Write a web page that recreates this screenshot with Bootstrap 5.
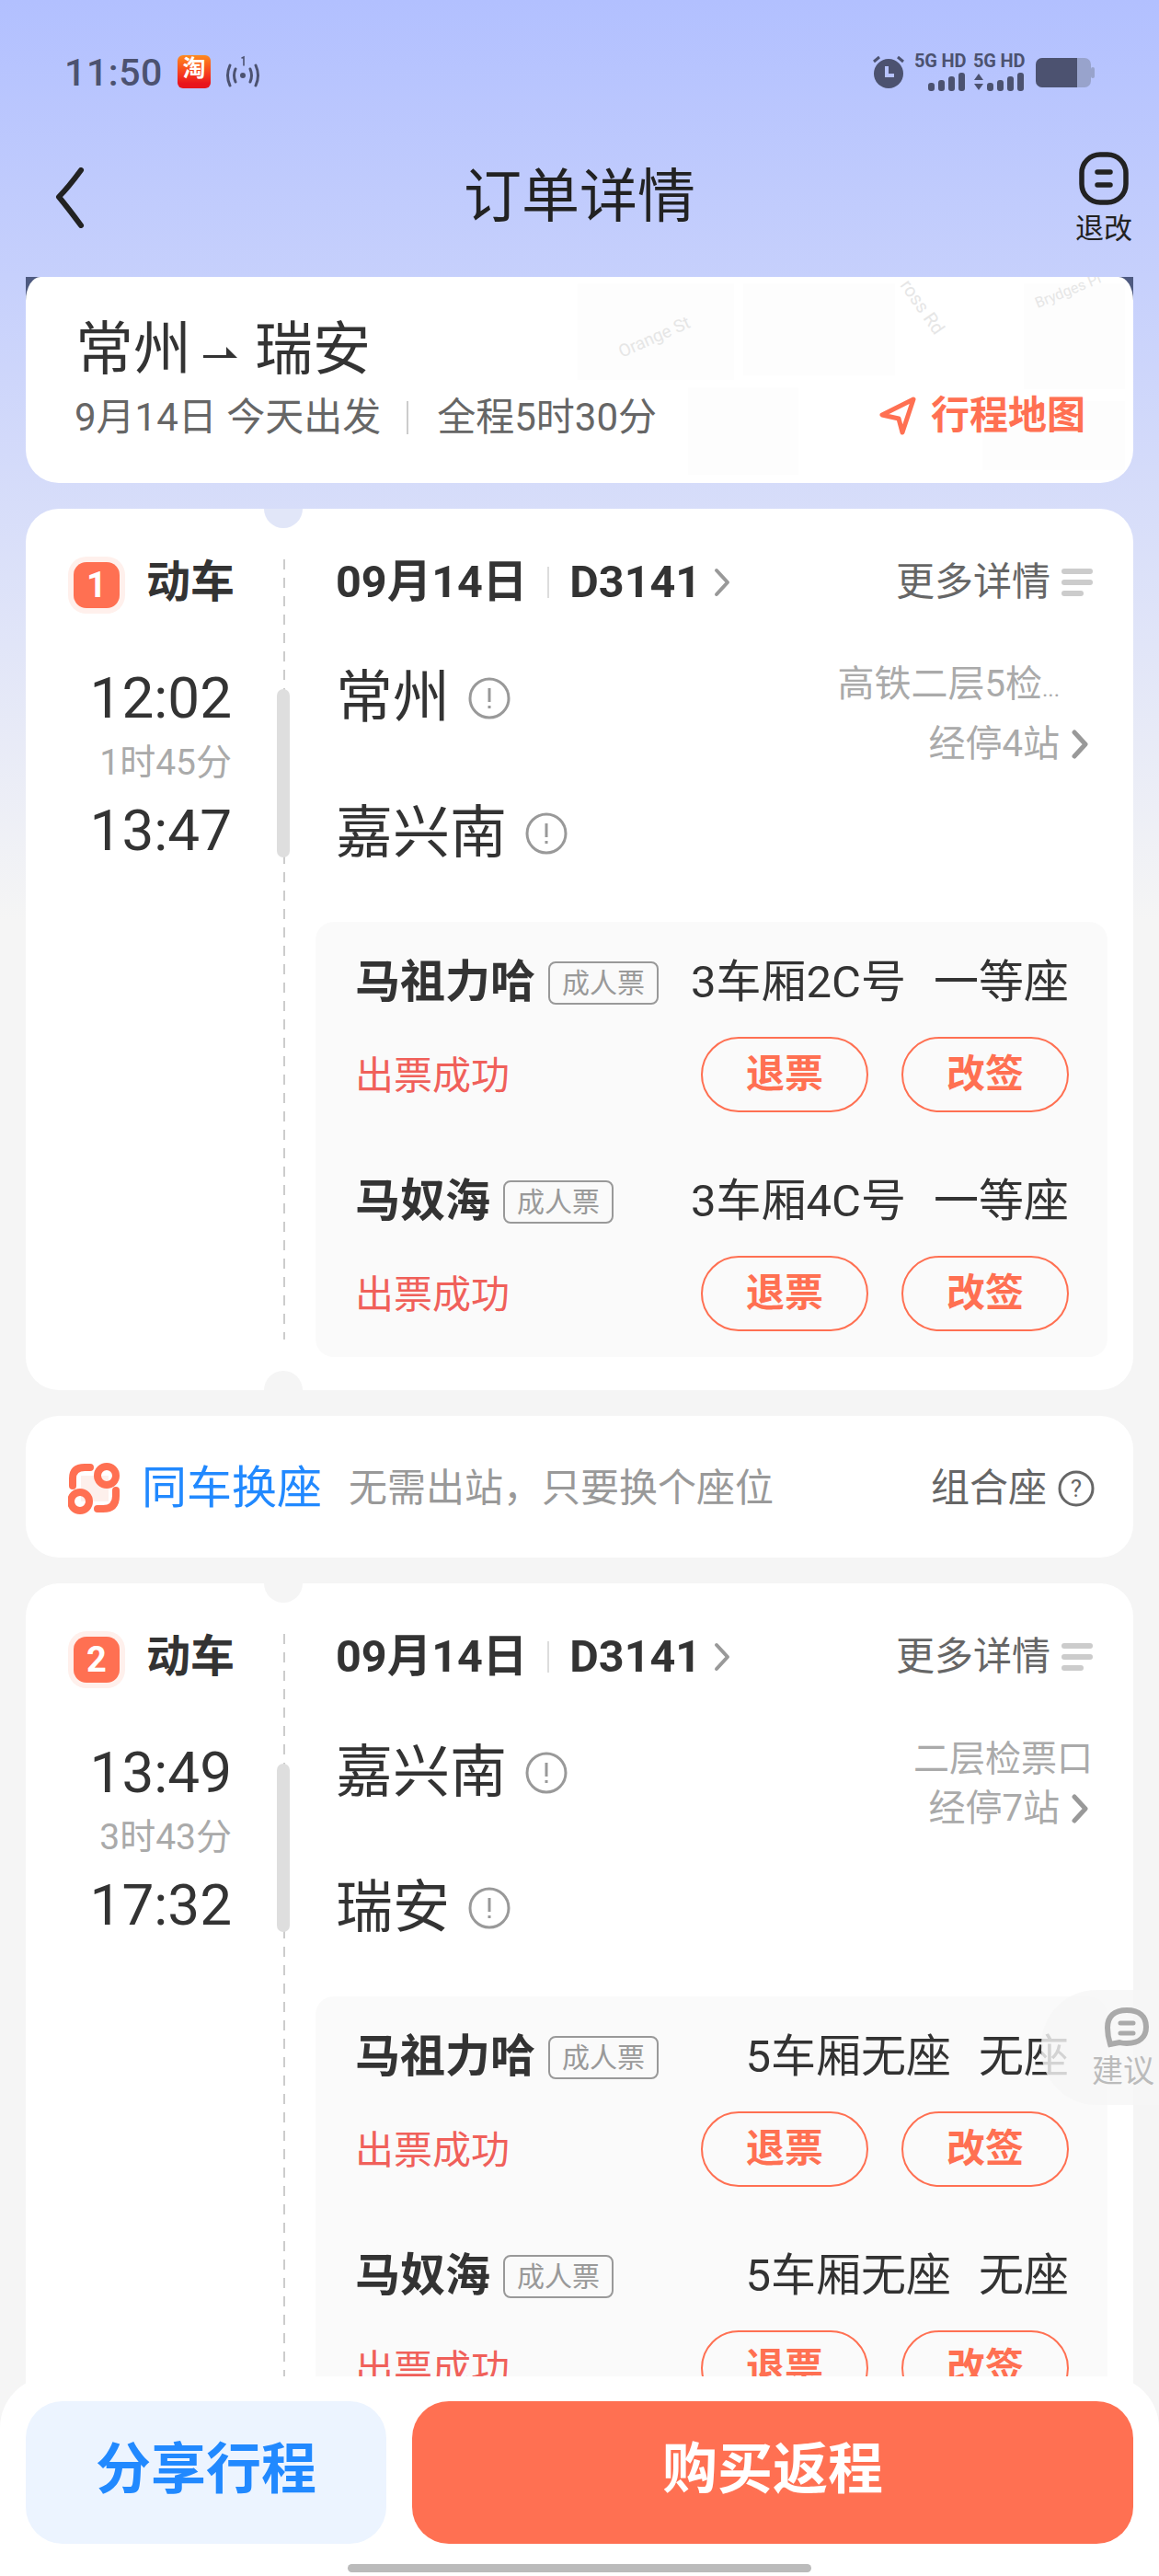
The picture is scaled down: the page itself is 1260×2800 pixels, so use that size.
<!DOCTYPE html>
<html lang="zh">
<head>
<meta charset="utf-8">
<title>订单详情</title>
<link rel="stylesheet" href="https://cdn.jsdelivr.net/npm/bootstrap@5.3.0/dist/css/bootstrap.min.css">
<style>
html,body{margin:0;background:#f5f5f5}
body{font-family:Roboto,"Noto Sans CJK SC",sans-serif;color:#333}
.screen{width:1260px;height:2800px;overflow:hidden;position:relative;background:linear-gradient(#b2c0ff 0,#f5f5f5 1000px)}
.statusbar{height:125px;padding:57px 70px 0;color:#4c5270}
.clock{font-size:41px;font-weight:500;line-height:44px;letter-spacing:.6px}
.tb-icon{width:36px;height:36px;margin:3px 0 0 16px;border-radius:6px;background:linear-gradient(#ff8a1e,#f5351e 70%,#e8141c);color:#fff;font-weight:700;font-size:25px;line-height:30px;text-align:center;border-bottom:5px solid #e8141c}
.net-label{font-size:20px;font-weight:700;line-height:18px;letter-spacing:-.2px;width:58px;white-space:nowrap}
.topbar{height:176px;padding:0 28px 0 60px;position:relative}
.page-title{font-size:63px;line-height:70px;color:#222;position:absolute;left:0;right:0;top:54px;text-align:center;margin:0;font-weight:400}
.refund-link{width:64px;font-size:31px;line-height:36px;color:#222;text-align:center;margin-top:40px}
.hero-wrap{margin:0 28px;height:224px;background:linear-gradient(#4e5a80 0,#4e5a80 30px,transparent 30px)}
.hero{height:224px;background:#fff;border-radius:16px 16px 36px 36px/26px 26px 36px 36px;position:relative;overflow:hidden;padding:43px 52px 0 54px}
.hero-map{position:absolute;left:0;top:0;width:1204px;height:224px}
.hero-map text{font-family:Roboto,sans-serif;fill:#e6e6e6}
.hero-main{position:relative}
.route{font-size:63px;line-height:72px;color:#333;white-space:nowrap}
.route svg{margin:0 18px 0 13px;vertical-align:middle}
.hero-sub{font-size:42px;line-height:50px;color:#666;margin-top:13px}
.hero-sub i{display:block;width:2px;height:36px;background:#ccc;margin:0 31px 0 28px}
.hero-link{font-size:42px;line-height:50px;color:#ff7052;font-weight:700}
.panel{margin:28px 28px 0;background:#fff;border-radius:36px;position:relative}
.bite{position:absolute;left:259px;width:42px;height:21px;background:#e1e6f8}
.bite-top{top:0;border-radius:0 0 21px 21px}
.bite-bot{bottom:0;border-radius:21px 21px 0 0;background:#f5f5f5}
.dash{position:absolute;left:280px;top:55px;bottom:55px;width:2px;background:repeating-linear-gradient(#ccc 0,#ccc 11px,transparent 11px,transparent 20px)}
.thumb{position:absolute;left:273px;top:196px;width:14px;height:183px;background:#dedede;border-radius:7px}
.train{padding:55px 44px 36px 0}
.left-col{width:337px;flex:none}
.num{width:50px;height:50px;background:#ff7052;border-radius:14px;color:#fff;font-size:38px;font-weight:700;line-height:50px;text-align:center;box-shadow:0 0 0 6px #fff0ec;margin:3px 29px 0 52px}
.kind{font-size:48px;font-weight:700;line-height:50px;color:#333}
.times{width:166px;margin-left:58px;text-align:right;margin-top:68px}
.time{font-size:62px;line-height:60px;color:#333}
.dura{font-size:39px;line-height:46px;color:#aaa;margin:17px 0 21px}
.date{font-size:48.5px;font-weight:700;line-height:50px;color:#333;white-space:nowrap}
.date i{display:block;width:2px;height:34px;background:#ddd;margin:0 22px 0 22px}
.date svg{margin-left:13px!important}
.more{font-size:42px;line-height:50px;color:#666}
.bars{width:34px;margin-left:12px}
.bars span{display:block;height:6px;background:#ccc;border-radius:3px;margin-bottom:6px}
.bars span:last-child{width:24px;margin:0}
.stations{padding-top:12px}
.st{font-size:62px;line-height:60px;color:#333}
.st svg{margin-left:20px}
.st+.st{margin-top:87px}
.info{font-size:40px;line-height:50px;color:#aaa;text-align:right;white-space:nowrap;margin-top:2px}
.info .cut{padding-right:36px}
.info .cut span{font-size:24px}
.info .stops{padding-right:4px}
.info svg{margin-left:12px;vertical-align:-3px}
.pax-box{background:#fafafa;border-radius:20px;margin:66px -16px 0 -22px;padding:41px 42px 28px 43px}
.pax+.pax{margin-top:72px}
.pname{font-size:49px;font-weight:700;line-height:50px;color:#333;white-space:nowrap}
.ptag{font-size:30px;line-height:43px;height:47px;padding:0 13px;border:2px solid #999;border-radius:8px;color:#999;margin-left:14px;white-space:nowrap}
.seat{font-size:49px;line-height:50px;color:#333;white-space:nowrap}
.seat span{margin-left:30px}
.pact{margin-top:34px}
.ok{font-size:42px;line-height:50px;color:#f0605a;margin-top:4px}
.act{width:182px;height:82px;border:2px solid #ff7052;border-radius:41px;color:#ff7052;background:transparent;font-size:42px;font-weight:700;line-height:1;padding:0;margin-left:36px}
.swap{height:154px;padding:3px 42px 0 46px}
.swap-title{font-size:49px;color:#2189ff;line-height:60px;margin:0 29px 0 22px}
.swap-sub{font-size:42px;color:#999;line-height:60px}
.swap-end{font-size:42px;color:#666;line-height:60px}
.suggest{position:absolute;right:0;top:2163px;width:128px;height:125px;background:rgba(247,247,247,.82);border-radius:60px 0 0 60px;color:#bbb;font-size:34px;line-height:38px;padding:19px 0 0 55px}
.suggest span{display:block;white-space:nowrap;margin-top:6px}
.suggest svg{display:block;margin-left:14px}
.bottombar{position:absolute;left:0;right:0;top:2583px;height:217px;background:#fff;border-radius:56px 56px 0 0;padding:27px 28px 0}
.cta{height:155px;border-radius:40px;font-size:60px;font-weight:700;border:0;padding:0 0 6px;line-height:1}
.cta-share{width:392px;background:#ecf4ff;color:#2189ff}
.cta-buy{flex:1;margin-left:28px;background:#ff7052;color:#fff}
.home{width:504px;height:9px;border-radius:5px;background:#bbb;margin:22px 0 0 350px}
</style>
</head>
<body>
<div class="screen">

  <div class="statusbar d-flex justify-content-between align-items-start">
    <div class="d-flex align-items-start">
      <div class="clock">11:50</div>
      <div class="tb-icon">淘</div>
      <svg class="ms-3" width="38" height="36" viewBox="0 0 38 36" fill="none" stroke="#4c5270" stroke-width="3" stroke-linecap="round" style="margin-top:3px">
        <circle cx="19" cy="22" r="3" fill="#4c5270" stroke="none"/>
        <path d="M11 15q-3 7 0 14M27 15q3 7 0 14M5 11q-5 11 0 22M33 11q5 11 0 22"/>
        <path d="M18 3l2-1v9" stroke-width="1.6"/>
      </svg>
    </div>
    <div class="d-flex align-items-start">
      <svg width="36" height="36" viewBox="0 0 36 36" style="margin:3px 6px 0 0">
        <circle cx="18" cy="20" r="16" fill="#4c5270"/>
        <path d="M2 7l6-5M34 7l-6-5" stroke="#4c5270" stroke-width="3" fill="none"/>
        <path d="M16 12v10h8" stroke="#b7c3ff" stroke-width="4" fill="none"/>
      </svg>
      <div class="d-flex flex-column align-items-start ms-1" style="width:60px">
        <div class="net-label">5G HD</div>
        <svg width="58" height="20" viewBox="0 0 58 20" class="mt-1"><g fill="#4c5270"><rect x="15" y="11" width="7" height="9" rx="3"/><rect x="26" y="8" width="7" height="12" rx="3"/><rect x="37" y="4" width="7" height="16" rx="3"/><rect x="48" y="0" width="7" height="20" rx="3"/></g></svg>
      </div>
      <div class="d-flex flex-column align-items-start ms-1" style="width:60px">
        <div class="net-label">5G HD</div>
        <svg width="58" height="20" viewBox="0 0 58 20" class="mt-1"><g fill="#4c5270"><path d="M1 8L6 1l5 7zM1 12h10l-5 7z"/><rect x="15" y="11" width="7" height="9" rx="3"/><rect x="26" y="8" width="7" height="12" rx="3"/><rect x="37" y="4" width="7" height="16" rx="3"/><rect x="48" y="0" width="7" height="20" rx="3"/></g></svg>
      </div>
      <svg width="64" height="32" viewBox="0 0 64 32" class="ms-2" style="margin-top:6px">
        <rect x="0" y="0" width="60" height="32" rx="7" fill="#98a3cc"/>
        <path d="M7 0h38v32H7a7 7 0 0 1-7-7V7a7 7 0 0 1 7-7z" fill="#4c5270"/>
        <rect x="60" y="10" width="4" height="12" rx="2" fill="#98a3cc"/>
      </svg>
    </div>
  </div>

  <div class="topbar d-flex justify-content-between align-items-start">
    <svg width="32" height="66" viewBox="0 0 32 66" fill="none" stroke="#222" stroke-width="6" stroke-linecap="round" stroke-linejoin="round" style="margin-top:57px"><path d="M28 3Q14 22 4 32Q14 44 28 63"/></svg>
    <h1 class="page-title">订单详情</h1>
    <div class="refund-link d-flex flex-column align-items-center">
      <svg width="54" height="58" viewBox="0 0 54 58" fill="none" stroke="#222" stroke-width="5.5" stroke-linecap="round"><rect x="3" y="3" width="48" height="52" rx="20"/><path d="M20 22h14M20 36h14"/></svg>
      <div class="mt-2" style="white-space:nowrap">退改</div>
    </div>
  </div>

  <div class="hero-wrap">
    <div class="hero">
      <svg class="hero-map" viewBox="0 0 1204 224" aria-hidden="true">
        <g fill="#fdfdfd">
          <rect x="600" y="7" width="170" height="105"/>
          <rect x="780" y="7" width="165" height="100"/>
          <rect x="1085" y="7" width="110" height="115"/>
          <rect x="720" y="120" width="120" height="95"/>
          <rect x="1040" y="135" width="155" height="75"/>
        </g>
        <text transform="translate(648 88) rotate(-24)" font-size="19">Orange St</text>
        <text transform="translate(950 9) rotate(55)" font-size="20">ross Rd</text>
        <text transform="translate(1100 34) rotate(-22)" font-size="16">Brydges Pl</text>
      </svg>
      <div class="hero-main d-flex flex-column h-100">
        <div class="route">常州<svg width="38" height="20" viewBox="0 0 38 20"><path d="M0 12h25V3l12 12H0z" fill="#333"/></svg>瑞安</div>
        <div class="d-flex justify-content-between align-items-center">
          <div class="hero-sub d-flex align-items-center" style="margin-left:-1px">9月14日 今天出发<i></i>全程5时30分</div>
          <div class="hero-link d-flex align-items-center" style="margin-top:8px">
            <svg class="me-3" width="40" height="42" viewBox="0 0 40 42" fill="none" stroke="#ff7052" stroke-width="5" stroke-linejoin="round"><path d="M37 3L3 20l18 4 4 15z"/></svg>行程地图
          </div>
        </div>
      </div>
    </div>
  </div>

  <section class="panel">
    <div class="bite bite-top"></div><div class="bite bite-bot"></div>
    <div class="dash"></div><div class="thumb"></div>
    <div class="train d-flex">
      <div class="left-col">
        <div class="d-flex"><div class="num">1</div><div class="kind">动车</div></div>
        <div class="times">
          <div class="time">12:02</div>
          <div class="dura">1时45分</div>
          <div class="time">13:47</div>
        </div>
      </div>
      <div class="flex-grow-1">
        <div class="d-flex justify-content-between">
          <div class="date d-flex align-items-center">09月14日<i></i>D3141<svg class="ms-3" width="20" height="32" viewBox="0 0 20 32" fill="none" stroke="#999" stroke-width="4" stroke-linecap="round" stroke-linejoin="round"><path d="M4 3l12 13L4 29"/></svg></div>
          <div class="more d-flex align-items-center">更多详情<div class="bars"><span></span><span></span><span></span></div></div>
        </div>
        <div class="d-flex justify-content-between align-items-start" style="margin-top:59px">
          <div class="stations">
            <div class="st d-flex align-items-center">常州<svg width="46" height="46" viewBox="0 0 46 46" fill="none" stroke="#999" stroke-width="3"><circle cx="23" cy="23" r="21"/><path d="M23 12v15M23 31v3"/></svg></div>
            <div class="st d-flex align-items-center">嘉兴南<svg width="46" height="46" viewBox="0 0 46 46" fill="none" stroke="#999" stroke-width="3"><circle cx="23" cy="23" r="21"/><path d="M23 12v15M23 31v3"/></svg></div>
          </div>
          <div class="info">
            <div class="cut">高铁二层5检<span>...</span></div>
            <div class="stops" style="margin-top:10px">经停4站<svg width="20" height="32" viewBox="0 0 20 32" fill="none" stroke="#999" stroke-width="5" stroke-linecap="round" stroke-linejoin="round"><path d="M4 3l12 13L4 29"/></svg></div>
          </div>
        </div>
        <div class="pax-box">
          <div class="pax">
            <div class="d-flex justify-content-between align-items-center">
              <div class="d-flex align-items-center"><div class="pname">马祖力哈</div><div class="ptag">成人票</div></div>
              <div class="seat">3车厢2C号<span>一等座</span></div>
            </div>
            <div class="pact d-flex justify-content-between align-items-center">
              <div class="ok">出票成功</div>
              <div class="d-flex"><button class="btn act">退票</button><button class="btn act">改签</button></div>
            </div>
          </div>
          <div class="pax">
            <div class="d-flex justify-content-between align-items-center">
              <div class="d-flex align-items-center"><div class="pname">马奴海</div><div class="ptag">成人票</div></div>
              <div class="seat">3车厢4C号<span>一等座</span></div>
            </div>
            <div class="pact d-flex justify-content-between align-items-center">
              <div class="ok">出票成功</div>
              <div class="d-flex"><button class="btn act">退票</button><button class="btn act">改签</button></div>
            </div>
          </div>
        </div>
      </div>
    </div>
  </section>

  <section class="panel swap d-flex align-items-center">
    <svg width="58" height="56" viewBox="0 0 58 56" fill="none" stroke="#ff7052">
      <rect x="14" y="14" width="30" height="28" fill="#fdf0ec" stroke="none"/>
      <circle cx="42" cy="14" r="10" stroke-width="8"/><circle cx="13" cy="42" r="10" stroke-width="8"/>
      <path d="M5 25V17Q5 5 18 5h6M52 30V36Q52 50 38 50h-6" stroke-width="8" stroke-linecap="round"/>
    </svg>
    <div class="swap-title">同车换座</div>
    <div class="swap-sub flex-grow-1">无需出站，只要换个座位</div>
    <div class="swap-end d-flex align-items-center">组合座<svg width="40" height="40" viewBox="0 0 40 40" style="margin-left:12px"><circle cx="20" cy="20" r="18" fill="none" stroke="#666" stroke-width="3"/><text x="20" y="29" font-size="26" fill="#666" text-anchor="middle" font-family="Roboto">?</text></svg></div>
  </section>

  <section class="panel">
    <div class="bite bite-top" style="background:#f5f5f5"></div>
    <div class="dash" style="bottom:-400px"></div><div class="thumb"></div>
    <div class="train d-flex">
      <div class="left-col">
        <div class="d-flex"><div class="num">2</div><div class="kind">动车</div></div>
        <div class="times">
          <div class="time">13:49</div>
          <div class="dura">3时43分</div>
          <div class="time">17:32</div>
        </div>
      </div>
      <div class="flex-grow-1">
        <div class="d-flex justify-content-between">
          <div class="date d-flex align-items-center">09月14日<i></i>D3141<svg class="ms-3" width="20" height="32" viewBox="0 0 20 32" fill="none" stroke="#999" stroke-width="4" stroke-linecap="round" stroke-linejoin="round"><path d="M4 3l12 13L4 29"/></svg></div>
          <div class="more d-flex align-items-center">更多详情<div class="bars"><span></span><span></span><span></span></div></div>
        </div>
        <div class="d-flex justify-content-between align-items-start" style="margin-top:59px">
          <div class="stations">
            <div class="st d-flex align-items-center">嘉兴南<svg width="46" height="46" viewBox="0 0 46 46" fill="none" stroke="#999" stroke-width="3"><circle cx="23" cy="23" r="21"/><path d="M23 12v15M23 31v3"/></svg></div>
            <div class="st d-flex align-items-center">瑞安<svg width="46" height="46" viewBox="0 0 46 46" fill="none" stroke="#999" stroke-width="3"><circle cx="23" cy="23" r="21"/><path d="M23 12v15M23 31v3"/></svg></div>
          </div>
          <div class="info">
            <div style="font-size:39px">二层检票口</div>
            <div class="stops" style="margin-top:4px">经停7站<svg width="20" height="32" viewBox="0 0 20 32" fill="none" stroke="#999" stroke-width="5" stroke-linecap="round" stroke-linejoin="round"><path d="M4 3l12 13L4 29"/></svg></div>
          </div>
        </div>
        <div class="pax-box">
          <div class="pax">
            <div class="d-flex justify-content-between align-items-center">
              <div class="d-flex align-items-center"><div class="pname">马祖力哈</div><div class="ptag">成人票</div></div>
              <div class="seat">5车厢无座<span>无座</span></div>
            </div>
            <div class="pact d-flex justify-content-between align-items-center">
              <div class="ok">出票成功</div>
              <div class="d-flex"><button class="btn act">退票</button><button class="btn act">改签</button></div>
            </div>
          </div>
          <div class="pax">
            <div class="d-flex justify-content-between align-items-center">
              <div class="d-flex align-items-center"><div class="pname">马奴海</div><div class="ptag">成人票</div></div>
              <div class="seat">5车厢无座<span>无座</span></div>
            </div>
            <div class="pact d-flex justify-content-between align-items-center">
              <div class="ok">出票成功</div>
              <div class="d-flex"><button class="btn act">退票</button><button class="btn act">改签</button></div>
            </div>
          </div>
        </div>
      </div>
    </div>
  </section>

  <div class="suggest">
    <svg width="48" height="44" viewBox="0 0 48 44" fill="none" stroke="#aaa" stroke-width="6" stroke-linecap="round"><path d="M24 3C10 3 3 10 3 22c0 6 1 12 3 18l10-2c3 1 5 1 8 1 14 0 21-7 21-18S38 3 24 3z"/><path d="M17 17h14M17 28h14" stroke-width="5"/></svg>
    <span>建议</span>
  </div>

  <div class="bottombar">
    <div class="d-flex">
      <button class="btn cta cta-share">分享行程</button>
      <button class="btn cta cta-buy">购买返程</button>
    </div>
    <div class="home"></div>
  </div>
</div>
<script src="https://cdn.jsdelivr.net/npm/bootstrap@5.3.0/dist/js/bootstrap.bundle.min.js"></script>
</body>
</html>
